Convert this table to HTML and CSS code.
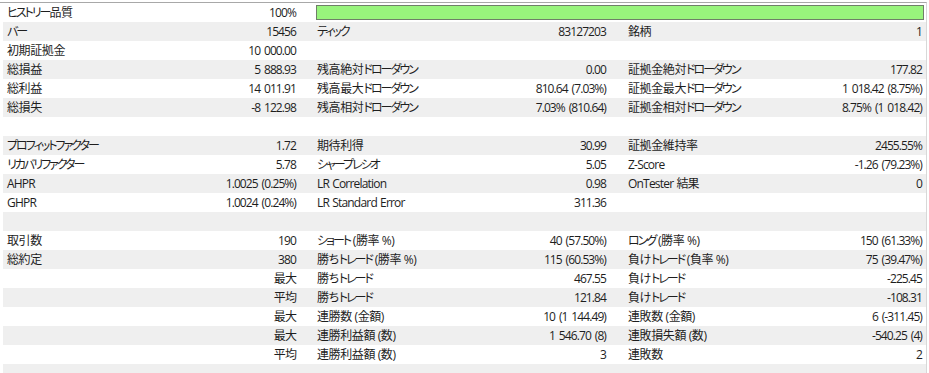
FILE: index.html
```html
<!DOCTYPE html>
<html lang="ja">
<head>
<meta charset="utf-8">
<link rel="stylesheet" href="styles.css">
</head>
<body>
<div class="report">
  <div class="row">
    <div class="l"><span class="k">ヒストリー</span>品質</div><div class="v">100%</div>
    <div class="bar-cell"><div class="bar"></div></div>
  </div>
  <div class="row alt">
    <div class="l"><span class="k">バー</span></div><div class="v">15456</div>
    <div class="l l2"><span class="k">ティック</span></div><div class="v">83127203</div>
    <div class="l l3">銘柄</div><div class="v">1</div>
  </div>
  <div class="row">
    <div class="l">初期証拠金</div><div class="v">10 000.00</div>
    <div class="l l2"></div><div class="v"></div><div class="l l3"></div><div class="v"></div>
  </div>
  <div class="row alt">
    <div class="l">総損益</div><div class="v">5 888.93</div>
    <div class="l l2">残高絶対<span class="k">ドローダウン</span></div><div class="v">0.00</div>
    <div class="l l3">証拠金絶対<span class="k">ドローダウン</span></div><div class="v">177.82</div>
  </div>
  <div class="row">
    <div class="l">総利益</div><div class="v">14 011.91</div>
    <div class="l l2">残高最大<span class="k">ドローダウン</span></div><div class="v">810.64 (7.03%)</div>
    <div class="l l3">証拠金最大<span class="k">ドローダウン</span></div><div class="v">1 018.42 (8.75%)</div>
  </div>
  <div class="row alt">
    <div class="l">総損失</div><div class="v">-8 122.98</div>
    <div class="l l2">残高相対<span class="k">ドローダウン</span></div><div class="v">7.03% (810.64)</div>
    <div class="l l3">証拠金相対<span class="k">ドローダウン</span></div><div class="v">8.75% (1 018.42)</div>
  </div>
  <div class="row blank"></div>
  <div class="row alt">
    <div class="l"><span class="k">プロフィットファクター</span></div><div class="v">1.72</div>
    <div class="l l2">期待利得</div><div class="v">30.99</div>
    <div class="l l3">証拠金維持率</div><div class="v">2455.55%</div>
  </div>
  <div class="row">
    <div class="l"><span class="k">リカバリファクター</span></div><div class="v">5.78</div>
    <div class="l l2"><span class="k">シャープレシオ</span></div><div class="v">5.05</div>
    <div class="l l3 lat">Z-Score</div><div class="v">-1.26 (79.23%)</div>
  </div>
  <div class="row alt">
    <div class="l lat">AHPR</div><div class="v">1.0025 (0.25%)</div>
    <div class="l l2 lat">LR Correlation</div><div class="v">0.98</div>
    <div class="l l3 lat">OnTester 結果</div><div class="v">0</div>
  </div>
  <div class="row">
    <div class="l lat">GHPR</div><div class="v">1.0024 (0.24%)</div>
    <div class="l l2 lat">LR Standard Error</div><div class="v">311.36</div>
    <div class="l l3"></div><div class="v"></div>
  </div>
  <div class="row alt blank"></div>
  <div class="row">
    <div class="l">取引数</div><div class="v">190</div>
    <div class="l l2"><span class="k">ショート</span> (勝率 %)</div><div class="v">40 (57.50%)</div>
    <div class="l l3"><span class="k">ロング</span> (勝率 %)</div><div class="v">150 (61.33%)</div>
  </div>
  <div class="row alt">
    <div class="l">総約定</div><div class="v">380</div>
    <div class="l l2">勝ち<span class="k">トレード</span> (勝率 %)</div><div class="v">115 (60.53%)</div>
    <div class="l l3">負け<span class="k">トレード</span> (負率 %)</div><div class="v">75 (39.47%)</div>
  </div>
  <div class="row">
    <div class="l"></div><div class="v">最大</div>
    <div class="l l2">勝ち<span class="k">トレード</span></div><div class="v">467.55</div>
    <div class="l l3">負け<span class="k">トレード</span></div><div class="v">-225.45</div>
  </div>
  <div class="row alt">
    <div class="l"></div><div class="v">平均</div>
    <div class="l l2">勝ち<span class="k">トレード</span></div><div class="v">121.84</div>
    <div class="l l3">負け<span class="k">トレード</span></div><div class="v">-108.31</div>
  </div>
  <div class="row">
    <div class="l"></div><div class="v">最大</div>
    <div class="l l2">連勝数 (金額)</div><div class="v">10 (1 144.49)</div>
    <div class="l l3">連敗数 (金額)</div><div class="v">6 (-311.45)</div>
  </div>
  <div class="row alt">
    <div class="l"></div><div class="v">最大</div>
    <div class="l l2">連勝利益額 (数)</div><div class="v">1 546.70 (8)</div>
    <div class="l l3">連敗損失額 (数)</div><div class="v">-540.25 (4)</div>
  </div>
  <div class="row">
    <div class="l"></div><div class="v">平均</div>
    <div class="l l2">連勝利益額 (数)</div><div class="v">3</div>
    <div class="l l3">連敗数</div><div class="v">2</div>
  </div>
  <div class="row alt blank"></div>
</div>
</body>
</html>
```
FILE: styles.css
```css
html, body {
  margin: 0;
  padding: 0;
  background: #ffffff;
}
body {
  font-family: "Open Sans", "Noto Sans CJK JP", sans-serif;
  font-size: 12px;
  color: #1e1e1e;
  font-feature-settings: "palt";
  overflow: hidden;
}
.report {
  margin-top: 2px;
  border-top: 1px solid #a8a8a8;
  padding-left: 3px;
  width: 923px;
  border-right: 1px solid #d8d8d8;
}
.row {
  display: grid;
  grid-template-columns: 150px 147px 160px 150px 160px 156px;
  height: 19px;
  line-height: 19px;
  background: #ffffff;
}
.row.alt {
  background: #efefef;
}
.l {
  padding-left: 4px;
  white-space: nowrap;
  letter-spacing: -0.4px;
}
.l.lat {
  letter-spacing: -0.8px;
  word-spacing: 0.8px;
}
.k {
  letter-spacing: -2px;
}
.l2 {
  padding-left: 17px;
}
.l3 {
  padding-left: 18px;
}
.v {
  text-align: right;
  padding-right: 4px;
  white-space: nowrap;
  letter-spacing: -0.9px;
  word-spacing: 1.6px;
}
.bar-cell {
  grid-column: 3 / 7;
  padding: 2px 2px 0 16px;
}
.bar {
  height: 13px;
  background: #98f47c;
  border: 1px solid #6f7f68;
}
```
